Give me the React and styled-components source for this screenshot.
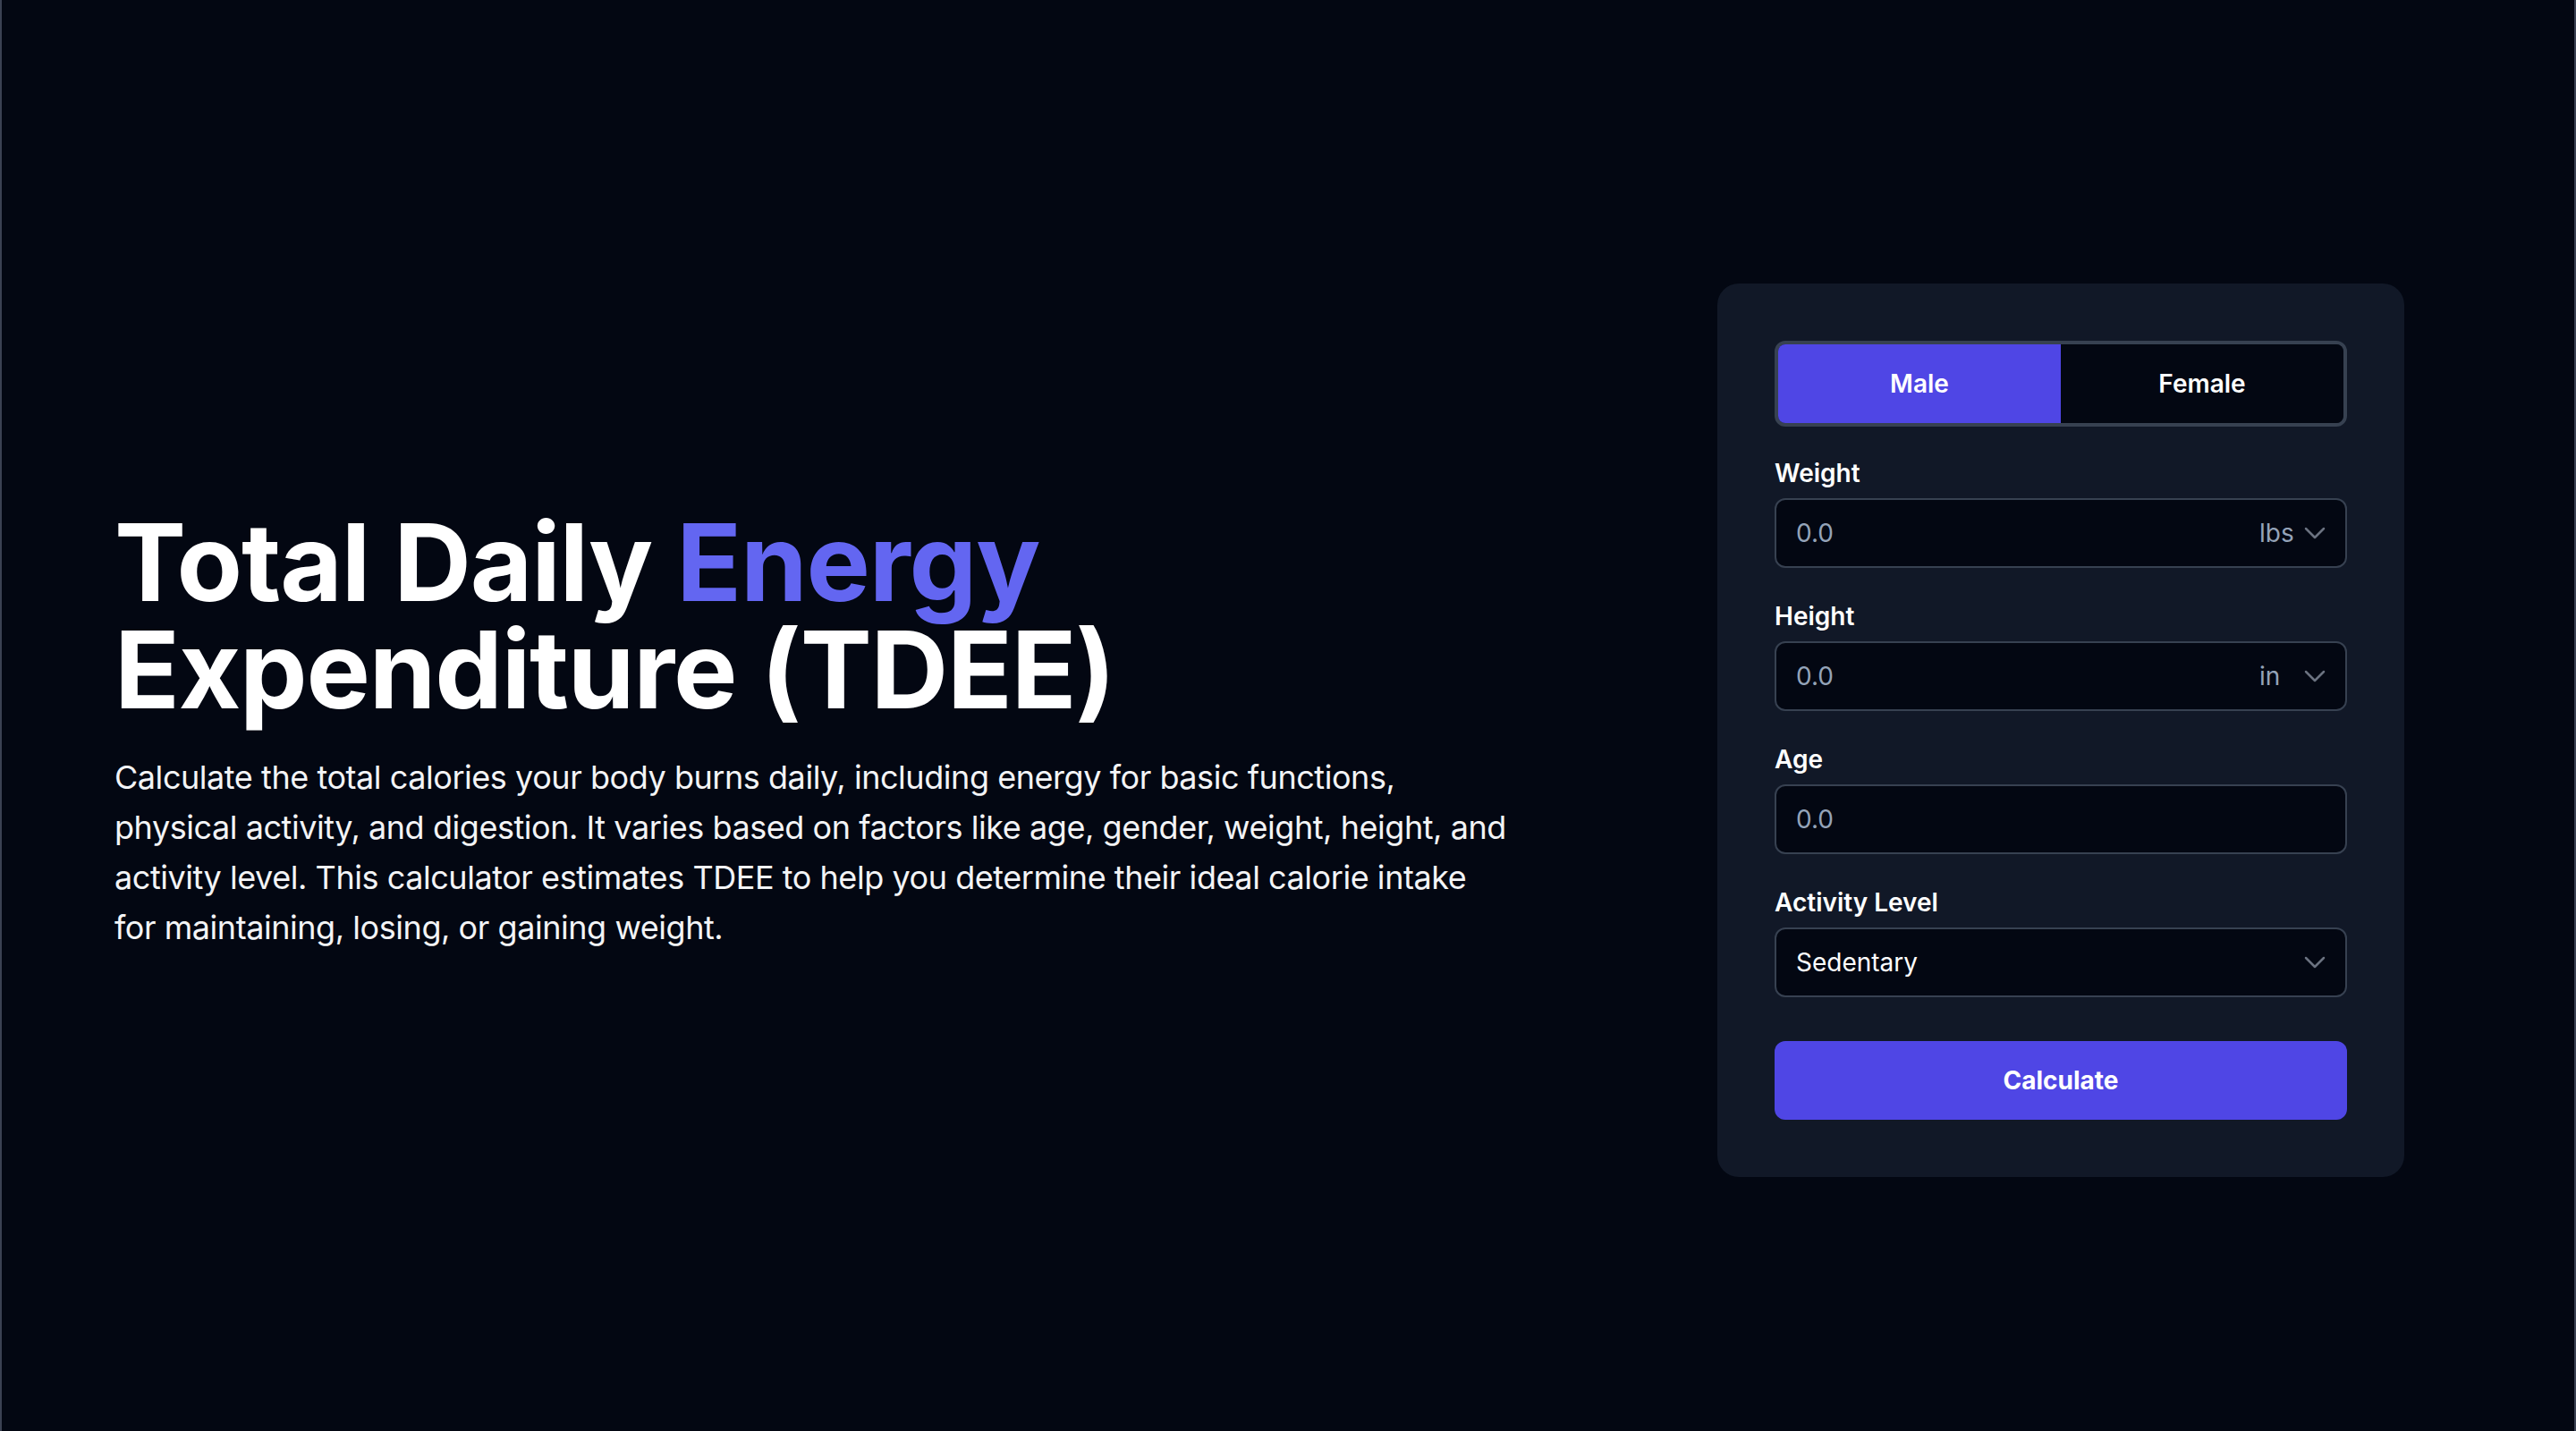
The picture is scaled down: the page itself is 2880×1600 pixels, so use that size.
import React, { useState } from "react";
import styled, { createGlobalStyle } from "styled-components";

const GlobalStyle = createGlobalStyle`
  * { box-sizing: border-box; }
  html, body { margin: 0; padding: 0; background: #030712; }
  body { font-family: Inter, "Noto Sans", sans-serif; color: #ffffff; }
`;

const Page = styled.main`
  height: 1600px;
  padding: 33px 190px 0 126px;
  display: flex;
  align-items: center;
  justify-content: space-between;
  background: #030712;
  border-left: 2px solid #3b4252;
  border-right: 2px solid #3b4252;
`;

const Intro = styled.section`
  display: flex;
  flex-direction: column;
  gap: 32px;
`;

const Title = styled.h1`
  margin: 0;
  font-size: 120px;
  line-height: 120px;
  font-weight: 700;
  letter-spacing: -1.2px;
  color: #ffffff;
`;

const Accent = styled.span`
  color: #6366f1;
`;

const Lead = styled.p`
  margin: 0;
  width: 1556px;
  font-size: 36px;
  line-height: 56px;
  font-weight: 400;
  letter-spacing: -0.45px;
  color: #f3f4f6;
`;

const Card = styled.form`
  width: 768px;
  padding: 64px;
  background: #111827;
  border-radius: 24px;
  display: flex;
  flex-direction: column;
`;

const Toggle = styled.div`
  display: grid;
  grid-template-columns: 1fr 1fr;
  height: 96px;
  border: 4px solid #374151;
  border-radius: 12px;
  overflow: hidden;
  margin-bottom: 32px;
`;

const ToggleButton = styled.button`
  border: none;
  margin: 0;
  font-family: inherit;
  font-size: 28px;
  font-weight: 600;
  color: #ffffff;
  background: ${p => (p.$active ? "#4f46e5" : "#030712")};
  cursor: pointer;
`;

const Fields = styled.div`
  display: flex;
  flex-direction: column;
  gap: 34px;
  margin-bottom: 49px;
`;

const Field = styled.div`
  display: flex;
  flex-direction: column;
  gap: 8px;
`;

const Label = styled.label`
  font-size: 28px;
  line-height: 40px;
  font-weight: 600;
  color: #ffffff;
`;

const InputBox = styled.div`
  height: 78px;
  display: flex;
  align-items: center;
  padding: 0 24px 0 22px;
  background: #030712;
  border: 2px solid #374151;
  border-radius: 12px;
`;

const Value = styled.span`
  flex: 1;
  font-size: 28px;
  color: ${p => (p.$muted ? "#94a3b8" : "#ffffff")};
`;

const Unit = styled.span`
  width: 42px;
  font-size: 28px;
  color: #94a3b8;
`;

const Chevron = styled.svg`
  width: 40px;
  height: 40px;
  margin-right: -10px;
  color: #6b7280;
`;

const SubmitButton = styled.button`
  height: 88px;
  border: none;
  border-radius: 12px;
  background: #4f46e5;
  color: #ffffff;
  font-family: inherit;
  font-size: 28px;
  font-weight: 700;
  cursor: pointer;
`;

const ChevronDown = () => (
  <Chevron viewBox="0 0 24 24" fill="none" stroke="currentColor" strokeWidth="1.5" strokeLinecap="round" strokeLinejoin="round">
    <path d="m6 9 6 6 6-6" />
  </Chevron>
);

const fields = [
  { label: "Weight", value: "0.0", unit: "lbs" },
  { label: "Height", value: "0.0", unit: "in" },
  { label: "Age", value: "0.0" },
];

export default function App() {
  const [gender, setGender] = useState("male");

  return (
    <>
      <GlobalStyle />
      <Page>
        <Intro>
          <Title>
            Total Daily <Accent>Energy</Accent>
            <br />
            Expenditure (TDEE)
          </Title>
          <Lead>
            Calculate the total calories your body burns daily, including energy for basic functions,
            physical activity, and digestion. It varies based on factors like age, gender, weight, height,
            and activity level. This calculator estimates TDEE to help you determine their ideal calorie
            intake for maintaining, losing, or gaining weight.
          </Lead>
        </Intro>

        <Card onSubmit={e => e.preventDefault()}>
          <Toggle>
            <ToggleButton type="button" $active={gender === "male"} onClick={() => setGender("male")}>
              Male
            </ToggleButton>
            <ToggleButton type="button" $active={gender === "female"} onClick={() => setGender("female")}>
              Female
            </ToggleButton>
          </Toggle>

          <Fields>
            {fields.map(f => (
              <Field key={f.label}>
                <Label>{f.label}</Label>
                <InputBox>
                  <Value $muted>{f.value}</Value>
                  {f.unit && (
                    <>
                      <Unit>{f.unit}</Unit>
                      <ChevronDown />
                    </>
                  )}
                </InputBox>
              </Field>
            ))}
            <Field>
              <Label>Activity Level</Label>
              <InputBox>
                <Value>Sedentary</Value>
                <ChevronDown />
              </InputBox>
            </Field>
          </Fields>

          <SubmitButton type="submit">Calculate</SubmitButton>
        </Card>
      </Page>
    </>
  );
}
